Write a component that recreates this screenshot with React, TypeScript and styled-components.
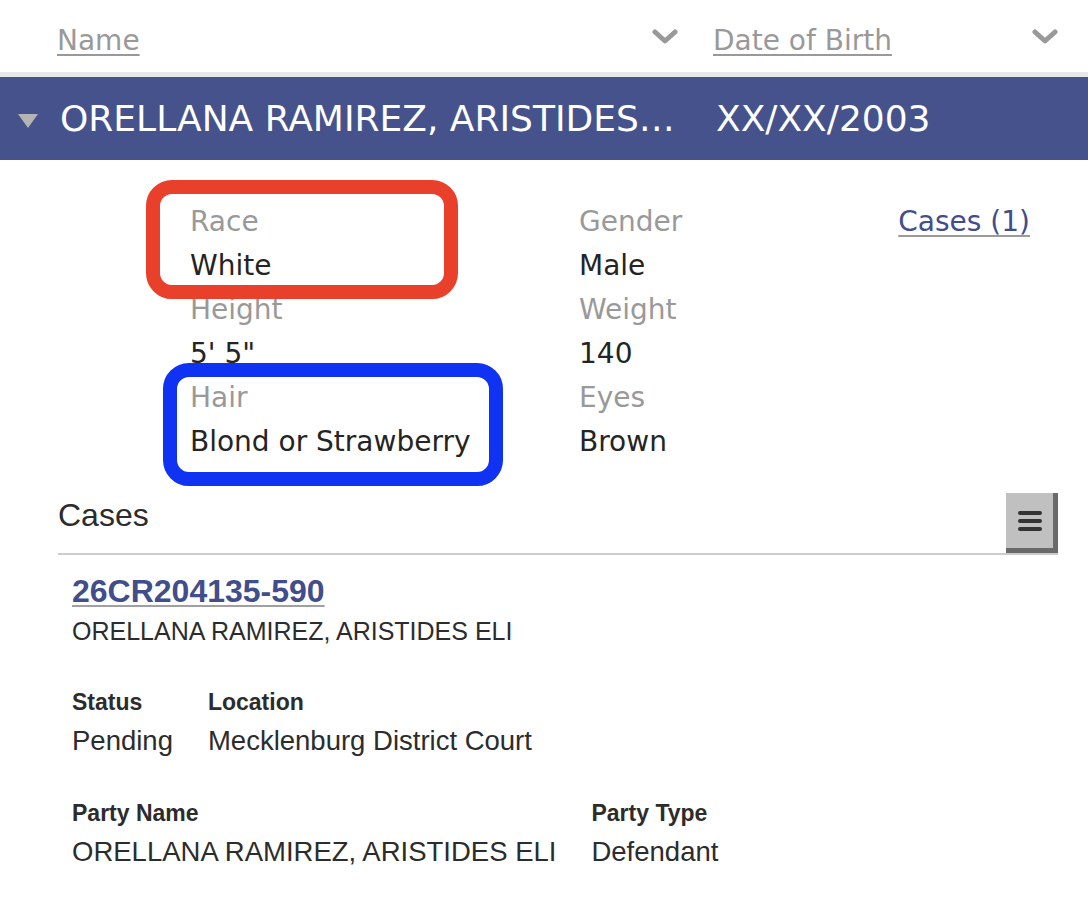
import React from 'react'
import styled, { createGlobalStyle } from 'styled-components'

const GlobalStyle = createGlobalStyle`
  body {
    margin: 0;
    background: #ffffff;
  }
`

const verdana = `'DejaVu Sans', Verdana, sans-serif`
const helvetica = `'Liberation Sans', Helvetica, Arial, sans-serif`

const colorLabel = '#999999'
const colorText = '#242424'
const colorLink = '#414e8b'

const Page = styled.div`
  width: 1088px;
  font-family: ${verdana};
`

const HeaderRow = styled.div`
  height: 77px;
  padding: 8px 0 0 57px;
  box-sizing: border-box;
  display: grid;
  grid-template-columns: 621px 345px;
  column-gap: 35px;
  align-items: center;
  border-bottom: 5px solid #e8e8e8;
`

const HeaderCell = styled.div`
  display: flex;
  align-items: center;
  justify-content: space-between;
`

const SortLink = styled.a`
  font-size: 28px;
  color: ${colorLabel};
  text-decoration: underline;
  text-decoration-thickness: 2px;
  text-underline-offset: 4px;
  cursor: pointer;
`

const Chevron = styled.svg`
  width: 26px;
  height: 16px;
  margin-top: -6px;
`

function ChevronDown() {
  return (
    <Chevron viewBox='0 0 26 16'>
      <polyline
        points='3,3 13,12 23,3'
        fill='none'
        stroke='#999'
        strokeWidth='5'
        strokeLinecap='round'
        strokeLinejoin='round'
      />
    </Chevron>
  )
}

const PersonBar = styled.div`
  height: 83px;
  background: #45528b;
  padding-left: 18px;
  display: grid;
  grid-template-columns: 20px 634px auto;
  column-gap: 22px;
  align-items: center;
  color: #ffffff;
  font-size: 36px;
  white-space: nowrap;
`

const Caret = styled.svg`
  width: 20px;
  height: 14px;
  margin-top: 4px;
`

const PersonName = styled.div`
  overflow: hidden;
  text-overflow: ellipsis;
`

const Details = styled.div`
  padding: 40px 58px 0 190px;
  display: grid;
  grid-template-columns: 389px 1fr auto;
  font-size: 28px;
  line-height: 44px;
`

const Field = styled.div`
  position: relative;
`

const FieldLabel = styled.div`
  color: ${colorLabel};
`

const FieldValue = styled.div`
  color: ${colorText};
`

const CasesLink = styled.a`
  color: ${colorLink};
  text-decoration: underline;
  text-decoration-color: #9a9a9a;
  text-decoration-thickness: 2px;
  text-underline-offset: 4px;
  cursor: pointer;
`

const Annotation = styled.div<{ $color: string; $left: number; $top: number; $w: number; $h: number }>`
  position: absolute;
  left: ${p => p.$left}px;
  top: ${p => p.$top}px;
  width: ${p => p.$w}px;
  height: ${p => p.$h}px;
  box-sizing: border-box;
  border: 14px solid ${p => p.$color};
  border-radius: 26px;
  z-index: 2;
  pointer-events: none;
`

const CasesSection = styled.section`
  margin-top: 29px;
  padding: 0 30px 0 58px;
  font-family: ${helvetica};
  color: #2c2c2c;
`

const CasesHeader = styled.div`
  display: flex;
  justify-content: space-between;
  align-items: flex-start;
  border-bottom: 2px solid #cccccc;
`

const CasesTitle = styled.h2`
  margin: 0;
  font-size: 32px;
  font-weight: normal;
  line-height: 44px;
`

const MenuButton = styled.button`
  width: 52px;
  height: 60px;
  padding: 0;
  box-sizing: border-box;
  background: #c0c0c0;
  border-style: solid;
  border-width: 0 5px 5px 0;
  border-color: #c0c0c0 #6a6a6a #6a6a6a #c0c0c0;
  display: flex;
  flex-direction: column;
  align-items: center;
  justify-content: center;
  gap: 4px;
  cursor: pointer;
`

const MenuBar = styled.span`
  width: 24px;
  height: 4px;
  border-radius: 2px;
  background: #333333;
`

const CaseItem = styled.div`
  padding: 16px 0 0 14px;
`

const CaseNumber = styled.a`
  display: inline-block;
  font-size: 32px;
  font-weight: bold;
  line-height: 40px;
  color: ${colorLink};
  text-decoration: underline;
  text-decoration-color: #a0a0a0;
  text-decoration-thickness: 2px;
  text-underline-offset: 3px;
  cursor: pointer;
`

const CaseParty = styled.div`
  font-size: 25px;
  line-height: 40px;
`

const InfoTable = styled.div`
  margin-top: 33px;
  display: grid;
  grid-template-columns: auto auto 1fr;
  column-gap: 35px;
  justify-content: start;

  & + & {
    margin-top: 33px;
  }
`

const InfoLabel = styled.div`
  font-size: 23px;
  font-weight: bold;
  line-height: 36px;
`

const InfoValue = styled.div`
  font-size: 27.5px;
  line-height: 42px;
`

const person = {
  name: 'ORELLANA RAMIREZ, ARISTIDES ELI',
  dob: 'XX/XX/2003',
}

export default function App() {
  return (
    <Page>
      <GlobalStyle />
      <HeaderRow>
        <HeaderCell>
          <SortLink>Name</SortLink>
          <ChevronDown />
        </HeaderCell>
        <HeaderCell>
          <SortLink>Date of Birth</SortLink>
          <ChevronDown />
        </HeaderCell>
      </HeaderRow>

      <PersonBar>
        <Caret viewBox='0 0 20 14'>
          <polygon points='0,0 20,0 10,14' fill='#b4b4b4' />
        </Caret>
        <PersonName>ORELLANA RAMIREZ, ARISTIDES…</PersonName>
        <div>{person.dob}</div>
      </PersonBar>

      <Details>
        <Field>
          <FieldLabel>Race</FieldLabel>
          <FieldValue>White</FieldValue>
          <Annotation $color='#e8402a' $left={-44} $top={-20} $w={312} $h={119} />
        </Field>
        <Field>
          <FieldLabel>Gender</FieldLabel>
          <FieldValue>Male</FieldValue>
        </Field>
        <div>
          <CasesLink>Cases (1)</CasesLink>
        </div>
        <Field>
          <FieldLabel>Height</FieldLabel>
          <FieldValue>5' 5"</FieldValue>
        </Field>
        <Field>
          <FieldLabel>Weight</FieldLabel>
          <FieldValue>140</FieldValue>
        </Field>
        <div />
        <Field>
          <FieldLabel>Hair</FieldLabel>
          <FieldValue>Blond or Strawberry</FieldValue>
          <Annotation $color='#1032f2' $left={-27} $top={-13} $w={340} $h={123} />
        </Field>
        <Field>
          <FieldLabel>Eyes</FieldLabel>
          <FieldValue>Brown</FieldValue>
        </Field>
      </Details>

      <CasesSection>
        <CasesHeader>
          <CasesTitle>Cases</CasesTitle>
          <MenuButton aria-label='Menu'>
            <MenuBar />
            <MenuBar />
            <MenuBar />
          </MenuButton>
        </CasesHeader>

        <CaseItem>
          <CaseNumber>26CR204135-590</CaseNumber>
          <CaseParty>{person.name}</CaseParty>

          <InfoTable>
            <InfoLabel>Status</InfoLabel>
            <InfoLabel>Location</InfoLabel>
            <div />
            <InfoValue>Pending</InfoValue>
            <InfoValue>Mecklenburg District Court</InfoValue>
            <div />
          </InfoTable>

          <InfoTable>
            <InfoLabel>Party Name</InfoLabel>
            <InfoLabel>Party Type</InfoLabel>
            <div />
            <InfoValue>{person.name}</InfoValue>
            <InfoValue>Defendant</InfoValue>
            <div />
          </InfoTable>
        </CaseItem>
      </CasesSection>
    </Page>
  )
}
